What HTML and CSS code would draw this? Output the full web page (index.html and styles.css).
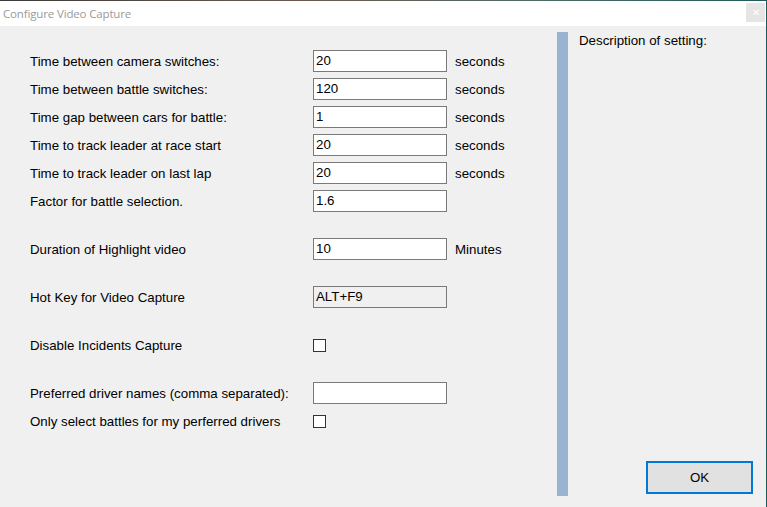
FILE: index.html
```html
<!DOCTYPE html>
<html>
<head>
<meta charset="utf-8">
<link rel="stylesheet" href="styles.css">
</head>
<body>
<div class="window">
  <div class="titlebar">
    <span class="title">Configure Video Capture</span>
    <span class="close">&#x2715;</span>
  </div>
  <div class="content">
    <div class="form">
      <div class="row"><span class="label">Time between camera switches:</span><span class="input">20</span><span class="unit">seconds</span></div>
      <div class="row"><span class="label">Time between battle switches:</span><span class="input">120</span><span class="unit">seconds</span></div>
      <div class="row"><span class="label">Time gap between cars for battle:</span><span class="input">1</span><span class="unit">seconds</span></div>
      <div class="row"><span class="label">Time to track leader at race start</span><span class="input">20</span><span class="unit">seconds</span></div>
      <div class="row"><span class="label">Time to track leader on last lap</span><span class="input">20</span><span class="unit">seconds</span></div>
      <div class="row"><span class="label">Factor for battle selection.</span><span class="input">1.6</span></div>
      <div class="row gap"><span class="label">Duration of Highlight video</span><span class="input">10</span><span class="unit">Minutes</span></div>
      <div class="row gap"><span class="label">Hot Key for Video Capture</span><span class="input readonly">ALT+F9</span></div>
      <div class="row gap"><span class="label">Disable Incidents Capture</span><span class="check"></span></div>
      <div class="row gap"><span class="label">Preferred driver names (comma separated):</span><span class="input"></span></div>
      <div class="row"><span class="label">Only select battles for my perferred drivers</span><span class="check"></span></div>
    </div>
    <div class="side">
      <div class="bar"></div>
      <div class="side-main">
        <div class="desc">Description of setting:</div>
        <div class="btn">OK</div>
      </div>
    </div>
  </div>
</div>
</body>
</html>
```
FILE: styles.css
```css
html, body {
  margin: 0;
  padding: 0;
}
body {
  width: 767px;
  height: 507px;
  overflow: hidden;
  background: #f0f0f0;
  font-family: "Liberation Sans", Arial, sans-serif;
  font-size: 13.3px;
  color: #000;
}
.window {
  width: 766px;
  height: 507px;
  border-right: 1px solid #1e5c5a;
  display: flex;
  flex-direction: column;
}
.titlebar {
  height: 25px;
  background: #fff;
  border-top: 1px solid #4a4a48;
  border-image: linear-gradient(to right, #3c3a38, #6b5a4e 40%, #4f6a66 70%, #1e5c5a) 1;
  display: flex;
  align-items: center;
  justify-content: space-between;
}
.title {
  padding-left: 3px;
  padding-bottom: 1px;
  font-family: "Open Sans", sans-serif;
  font-size: 11.5px;
  color: #9a9a9a;
  letter-spacing: -0.15px;
}
.close {
  width: 19px;
  height: 19px;
  margin-right: 1px;
  margin-bottom: 2px;
  background: #e5e5e5;
  color: #fff;
  font-size: 10px;
  display: flex;
  align-items: center;
  justify-content: center;
}
.content {
  flex: 1;
  display: flex;
}
.form {
  width: 527px;
  padding-left: 30px;
  padding-top: 24px;
  display: flex;
  flex-direction: column;
  gap: 6px;
}
.row {
  height: 22px;
  display: grid;
  grid-template-columns: 283px 134px auto;
  align-items: center;
}
.row.gap {
  margin-top: 20px;
}
.label {
  padding-top: 1px;
}
.input {
  box-sizing: border-box;
  height: 22px;
  border: 1px solid #7a7a7a;
  background: #fff;
  padding-left: 2px;
  line-height: 20px;
}
.input.readonly {
  background: #f0f0f0;
}
.unit {
  padding-left: 8px;
  padding-top: 1px;
}
.check {
  box-sizing: border-box;
  width: 13px;
  height: 13px;
  border: 1px solid #333;
  background: #fff;
}
.side {
  display: flex;
  padding-top: 6px;
}
.bar {
  width: 11px;
  height: 464px;
  background: #99b4d1;
}
.side-main {
  width: 187px;
  height: 464px;
  padding-left: 11px;
  display: flex;
  flex-direction: column;
  justify-content: space-between;
}
.desc {
  line-height: 18px;
}
.btn {
  box-sizing: border-box;
  width: 107px;
  height: 33px;
  margin-left: 67px;
  margin-bottom: 2px;
  border: 2px solid #0078d7;
  background: #e1e1e1;
  display: flex;
  align-items: center;
  justify-content: center;
}
```
